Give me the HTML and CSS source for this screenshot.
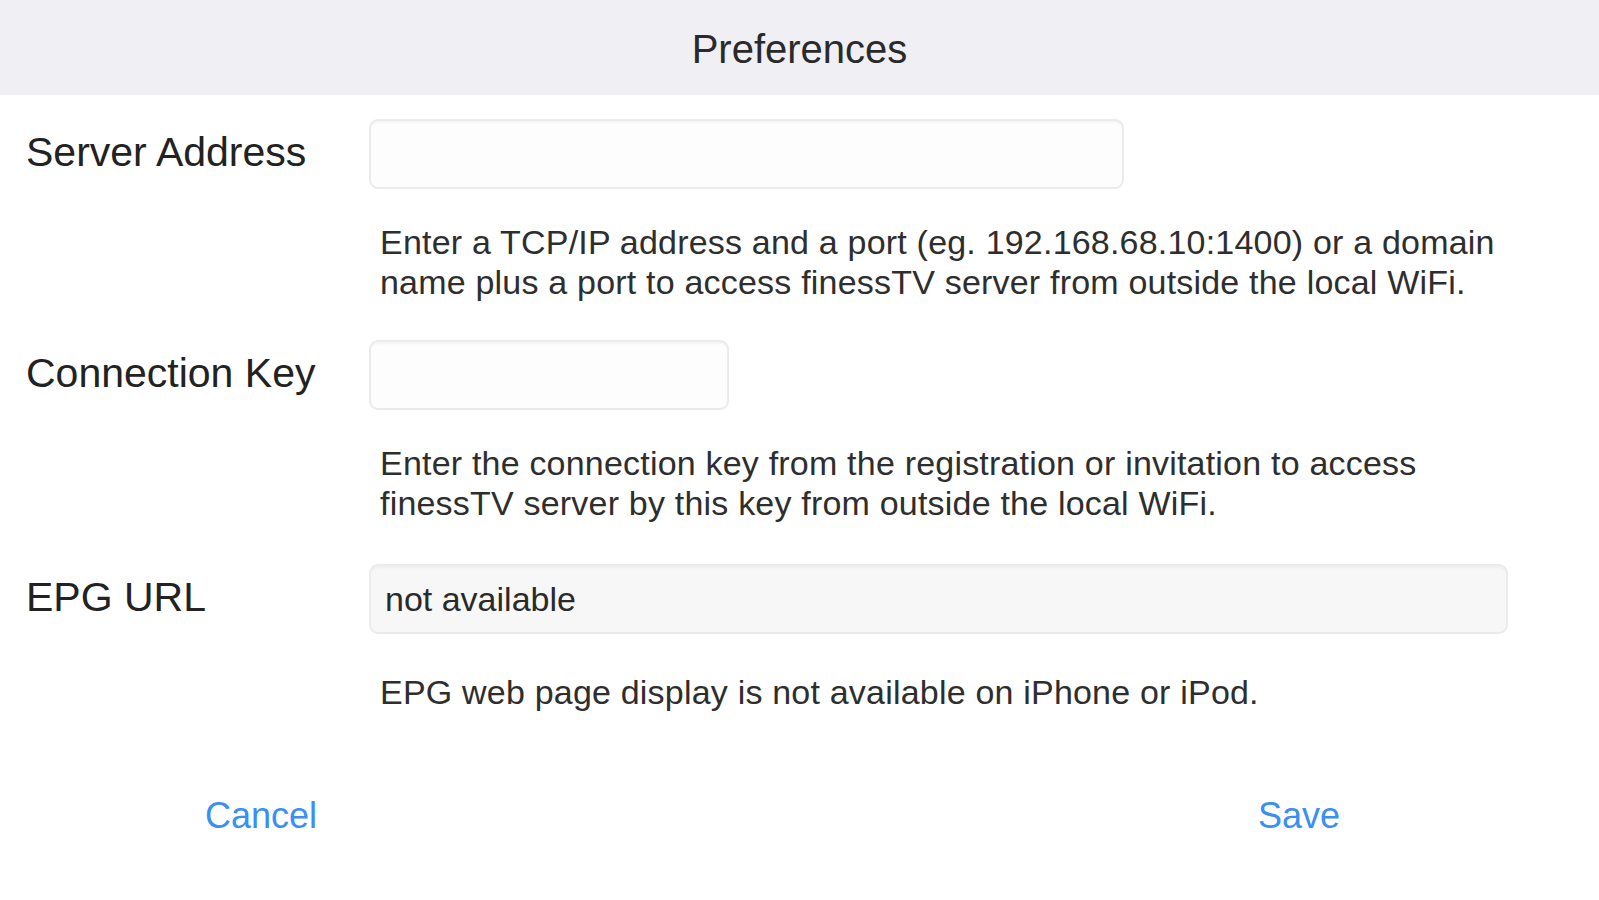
FILE: index.html
```html
<!DOCTYPE html>
<html lang="en">
<head>
<meta charset="utf-8">
<title>Preferences</title>
<link rel="stylesheet" href="styles.css">
</head>
<body>
<div class="page">
  <header class="topbar">
    <h1 class="title">Preferences</h1>
  </header>
  <main class="form">
    <div class="row">
      <label class="label">Server Address</label>
      <div class="field field--wide"></div>
    </div>
    <p class="help">Enter a TCP/IP address and a port (eg. 192.168.68.10:1400) or a domain<br>name plus a port to access finessTV server from outside the local WiFi.</p>

    <div class="row">
      <label class="label">Connection Key</label>
      <div class="field field--short"></div>
    </div>
    <p class="help help--wide-gap">Enter the connection key from the registration or invitation to access<br>finessTV server by this key from outside the local WiFi.</p>

    <div class="row">
      <label class="label">EPG URL</label>
      <div class="field field--full field--disabled">not available</div>
    </div>
    <p class="help help--single">EPG web page display is not available on iPhone or iPod.</p>
  </main>
  <footer class="actions">
    <button class="btn">Cancel</button>
    <button class="btn">Save</button>
  </footer>
</div>
</body>
</html>
```

FILE: styles.css
```css
* { box-sizing: border-box; }

html, body {
  margin: 0;
  padding: 0;
  background: #ffffff;
}

body {
  font-family: "Liberation Sans", Arial, Helvetica, sans-serif;
  color: #222;
  width: 1599px;
  height: 900px;
  overflow: hidden;
}

.topbar {
  height: 95px;
  background: #efeff4;
  display: flex;
  align-items: center;
  justify-content: center;
}

.title {
  margin: 0;
  font-size: 40px;
  font-weight: normal;
  color: #2a2a2a;
  line-height: 1;
  padding-top: 2px;
}

.form {
  padding-top: 24px;
}

.row {
  display: flex;
  align-items: center;
  height: 70px;
}

.label {
  width: 369px;
  padding-left: 26px;
  font-size: 41px;
  color: #222;
  line-height: 1;
  margin-top: -3px;
}

.field {
  height: 70px;
  border: 2px solid #ebebeb;
  border-radius: 9px;
  background: #fdfdfd;
  box-shadow: inset 0 4px 2px -2px rgba(0, 0, 0, 0.035);
  display: flex;
  align-items: center;
  font-size: 34px;
  color: #2a2a2a;
  padding-left: 14px;
}

.field--wide { width: 755px; }
.field--short { width: 360px; }
.field--full { width: 1139px; }

.field--disabled {
  background: #f7f7f7;
}

.help {
  margin: 33px 0 38px 380px;
  font-size: 34px;
  letter-spacing: 0.2px;
  line-height: 40px;
  color: #2e2e2e;
}

.help--wide-gap {
  margin-bottom: 41px;
}

.help--single {
  margin-top: 38px;
}

.actions {
  display: flex;
  justify-content: space-between;
  padding: 46px 259px 0 205px;
}

.btn {
  background: none;
  border: 0;
  padding: 0;
  font-family: "Liberation Sans", Arial, Helvetica, sans-serif;
  font-size: 36px;
  color: #3a8ff3;
  line-height: 40px;
  cursor: pointer;
}
```
